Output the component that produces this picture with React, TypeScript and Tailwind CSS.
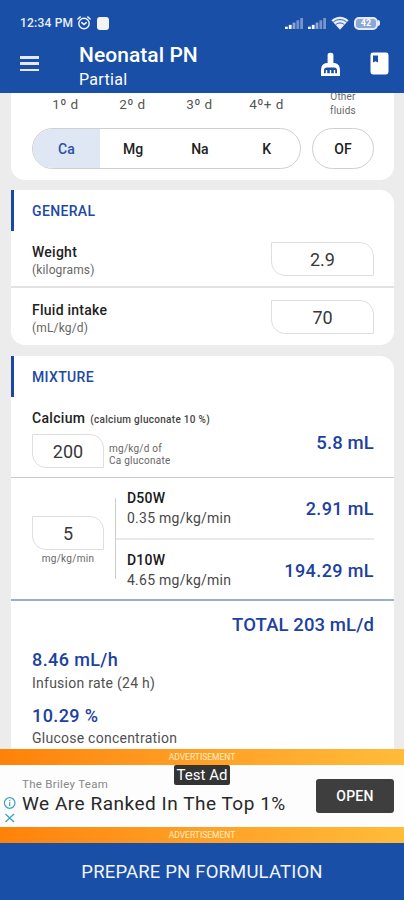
import type { ReactNode } from "react";

const electrolytes = [
  { day: "1º d", label: "Ca", active: true },
  { day: "2º d", label: "Mg", active: false },
  { day: "3º d", label: "Na", active: false },
  { day: "4º+ d", label: "K", active: false },
];

const generalFields = [
  { label: "Weight", unit: "(kilograms)", value: "2.9" },
  { label: "Fluid intake", unit: "(mL/kg/d)", value: "70" },
];

function SignalIcon() {
  return (
    <svg className="h-[11px] w-[18px]" viewBox="0 0 18 12" fill="#fff" preserveAspectRatio="none">
      <rect x="0" y="9.5" width="2.8" height="2.5" />
      <rect x="3.8" y="7.5" width="2.8" height="4.5" />
      <rect x="7.6" y="5" width="2.8" height="7" opacity="0.5" />
      <rect x="11.4" y="2.5" width="2.8" height="9.5" opacity="0.4" />
      <rect x="15.2" y="0" width="2.8" height="12" opacity="0.4" />
    </svg>
  );
}

function WifiIcon() {
  return (
    <svg className="h-[14px] w-[18px]" viewBox="0 0 18 14" fill="none">
      <path d="M0.4 4.2C5.4 -0.5 12.6 -0.5 17.6 4.2L9 13.8Z" fill="#e8eefb" />
      <path
        d="M2.3 6.2C6 2.7 12 2.7 15.7 6.2M4.7 8.7C7.2 6.4 10.8 6.4 13.3 8.7"
        stroke="#194fa7"
        strokeWidth="0.9"
      />
    </svg>
  );
}

function AlarmIcon() {
  return (
    <svg
      className="h-[14px] w-[14px]"
      viewBox="0 0 14 14"
      fill="none"
      stroke="#f4f6ff"
      strokeWidth="1.4"
      strokeLinecap="round"
    >
      <circle cx="7" cy="7.5" r="5.2" />
      <path d="M0.9 3L3.3 0.9M13.1 3L10.7 0.9M4.7 6.6L7 8.6L9.3 6.6" />
    </svg>
  );
}

function BatteryIcon() {
  return (
    <div className="flex items-center">
      <div className="flex h-[13px] w-[24px] items-center justify-center rounded-[5px] border-2 border-[#e3eafb] bg-[#8ca6d6]">
        <span className="text-[9px] font-bold leading-none text-white">42</span>
      </div>
      <div className="h-[6px] w-[2px] rounded-r-sm bg-[#e3eafb]" />
    </div>
  );
}

function BrushIcon() {
  return (
    <svg className="h-[25px] w-[21px]" viewBox="0 0 21 25">
      <path
        d="M7.6 3Q7.6 0.7 10.5 0.7Q13.4 0.7 13.4 3V11H14.6Q20 12 20 18V24H1V18Q1 12 6.4 11H7.6Z"
        fill="#fff"
      />
      <path
        d="M4 21.2V18.5Q4 15.6 7 15.6H14Q17 15.6 17 18.5V21.2H15.2V18H13.8V21.2H11.2V18H9.8V21.2H7.2V18H5.8V21.2Z"
        fill="#194fa7"
      />
    </svg>
  );
}

function BookIcon() {
  return (
    <svg className="h-[23px] w-[19px]" viewBox="0 0 19 23">
      <rect x="0.5" y="0.5" width="18" height="22" rx="2.4" fill="#fff" />
      <path d="M3 3.4H8V10.4L5.5 9.2L3 10.4Z" fill="#194fa7" />
    </svg>
  );
}

function SectionTitle({ children }: { children: ReactNode }) {
  return (
    <div className="flex h-[41px] items-center border-l-3 border-[#1c46a3] pl-[18px]">
      <h2 className="text-[14px] font-medium leading-none tracking-[0.35px] text-[#2149a3]">
        {children}
      </h2>
    </div>
  );
}

function ValueBox({ value, className }: { value: string; className: string }) {
  return (
    <div
      className={`flex h-[34px] items-center justify-center rounded-bl-[14px] rounded-tr-[14px] border border-[#dedede] pt-px text-[18px] text-[#383838] ${className}`}
    >
      {value}
    </div>
  );
}

function DextroseRow({ name, rate, volume }: { name: string; rate: string; volume: string }) {
  return (
    <div className="flex items-center justify-between pl-[11px]">
      <div>
        <p className="text-[14px] font-medium leading-[20px] tracking-[0.2px] text-[#181818]">{name}</p>
        <p className="text-[14px] leading-[20px] tracking-[0.25px] text-[#484848]">{rate}</p>
      </div>
      <p className="pt-px text-[18px] font-medium leading-[28px] tracking-[0.4px] text-[#1d419f]">{volume}</p>
    </div>
  );
}

function AdStrip() {
  return (
    <div className="flex h-[16px] shrink-0 items-center justify-center bg-linear-to-r from-[#ff8208] to-[#ffbc38] text-[8.5px] text-[#fff0cc]">
      ADVERTISEMENT
    </div>
  );
}

export default function App() {
  return (
    <div className="flex h-[900px] w-[404px] flex-col overflow-hidden bg-[#ececec] font-[Roboto,sans-serif]">
      <header className="h-[93px] shrink-0 bg-[#194fa7] text-white">
        <div className="flex h-[46px] items-center justify-between pl-5 pr-[24px]">
          <div className="flex items-center">
            <span className="w-[57px] whitespace-nowrap text-[12px] font-medium tracking-[0.2px] text-[#e8eefc]">
              12:34 PM
            </span>
            <AlarmIcon />
            <div className="ml-[6px] h-[13px] w-[12px] rounded-[3px] bg-[#f3f3f5]" />
          </div>
          <div className="flex items-center gap-[5px]">
            <SignalIcon />
            <SignalIcon />
            <WifiIcon />
            <BatteryIcon />
          </div>
        </div>
        <div className="flex h-[46px] pl-5 pr-[15px]">
          <div className="mt-[10px] flex h-[15px] w-[19px] flex-col justify-between">
            <div className="h-[2.5px] bg-[#e6e8ff]" />
            <div className="h-[2.5px] bg-[#e6e8ff]" />
            <div className="h-[2.5px] bg-[#e6e8ff]" />
          </div>
          <div className="ml-10 flex-1">
            <h1 className="mt-[-3px] text-[21px] font-medium leading-[24px] tracking-[0.05px]">Neonatal PN</h1>
            <p className="text-[16px] leading-[25px] tracking-[0.3px]">Partial</p>
          </div>
          <div className="mt-[6px] flex gap-[29px]">
            <BrushIcon />
            <BookIcon />
          </div>
        </div>
      </header>

      <main className="h-[656px] shrink-0 overflow-hidden pl-[11px] pr-[10px]">
        <section className="flex h-[87px] gap-[11px] rounded-b-[14px] bg-white pl-[21px]">
          <div>
            <div className="flex h-[35px] pt-[2px]">
              {electrolytes.map((item) => (
                <span
                  key={item.day}
                  className="w-[67px] text-center text-[13.5px] leading-[18px] tracking-[0.4px] text-[#555]"
                >
                  {item.day}
                </span>
              ))}
            </div>
            <div className="flex h-[41px] w-[269px] overflow-hidden rounded-full border border-[#cfcfcf]">
              {electrolytes.map((item) => (
                <button
                  key={item.label}
                  className={`flex-1 pt-px text-[14px] font-medium ${
                    item.active ? "bg-[#dfe6f4] text-[#2b50a7]" : "text-[#222]"
                  }`}
                >
                  {item.label}
                </button>
              ))}
            </div>
          </div>
          <div className="w-[62px]">
            <p className="mt-[-3px] h-[38px] text-center text-[10px] leading-[14px] tracking-[0.2px] text-[#666]">
              Other
              <br />
              fluids
            </p>
            <button className="h-[41px] w-full rounded-full border border-[#cfcfcf] pt-px text-[14px] font-medium text-[#222]">
              OF
            </button>
          </div>
        </section>

        <section className="mt-[10px] h-[155px] overflow-hidden rounded-[14px] rounded-tl-none bg-white">
          <SectionTitle>GENERAL</SectionTitle>
          <div className="divide-y-2 divide-[#e2e2e2]">
            {generalFields.map((field) => (
              <div key={field.label} className="flex h-[57px] items-center justify-between pl-[21px] pr-5">
                <div className="pt-[5px]">
                  <p className="text-[14px] font-medium leading-[18px] tracking-[0.25px] text-[#222]">
                    {field.label}
                  </p>
                  <p className="text-[12px] leading-[18px] tracking-[0.15px] text-[#666]">{field.unit}</p>
                </div>
                <ValueBox value={field.value} className="w-[103px]" />
              </div>
            ))}
          </div>
        </section>

        <section className="mt-[11px] h-[400px] rounded-tr-[14px] bg-white">
          <SectionTitle>MIXTURE</SectionTitle>

          <div className="flex h-[81px] justify-between border-b border-[#ccc] pl-[21px] pr-5 pt-3">
            <div>
              <p className="text-[14px] font-medium leading-[18px] tracking-[0.3px] text-[#222]">
                Calcium
                <span className="ml-[5px] text-[10px] tracking-[0.3px] text-[#444]">
                  (calcium gluconate 10 %)
                </span>
              </p>
              <div className="mt-[5px] flex">
                <ValueBox value="200" className="w-[72px]" />
                <p className="ml-[5px] mt-[9px] text-[10px] leading-[12px] tracking-[0.25px] text-[#666]">
                  mg/kg/d of
                  <br />
                  Ca gluconate
                </p>
              </div>
            </div>
            <p className="mt-[20px] text-[18.5px] font-medium leading-[28px] tracking-[0.15px] text-[#1d419f]">
              5.8 mL
            </p>
          </div>

          <div className="flex h-[123px] border-b-2 border-[#9aafd0] pl-[21px] pr-5">
            <div className="mt-[38px] w-[72px]">
              <ValueBox value="5" className="w-[72px]" />
              <p className="text-center text-[10px] leading-[17px] tracking-[0.3px] text-[#666]">mg/kg/min</p>
            </div>
            <div className="ml-[11px] mt-[20px] h-[81px] w-px bg-[#ccc]" />
            <div className="flex-1 pt-[10px]">
              <DextroseRow name="D50W" rate="0.35 mg/kg/min" volume="2.91 mL" />
              <div className="my-[10px] h-[2px] bg-[#e9e9e9]" />
              <DextroseRow name="D10W" rate="4.65 mg/kg/min" volume="194.29 mL" />
            </div>
          </div>

          <div className="pl-[21px] pr-5">
            <p className="mt-3 text-right text-[18.5px] font-medium leading-[24px] tracking-[0.1px] text-[#1d419f]">
              TOTAL 203 mL/d
            </p>
            <p className="mt-[11px] text-[18px] font-medium leading-[24px] tracking-[0.4px] text-[#1d419f]">
              8.46 mL/h
            </p>
            <p className="text-[14px] leading-[22px] tracking-[0.25px] text-[#505050]">
              Infusion rate (24 h)
            </p>
            <p className="mt-[10px] text-[18px] font-medium leading-[24px] tracking-[0.4px] text-[#1d419f]">
              10.29 %
            </p>
            <p className="text-[14px] leading-[21px] tracking-[0.25px] text-[#505050]">
              Glucose concentration
            </p>
          </div>
        </section>
      </main>

      <AdStrip />
      <div className="relative flex h-[62px] shrink-0 justify-between bg-[#fdfdfd] pr-[10px]">
        <div className="flex">
          <svg className="mt-[31px] h-[28px] w-[19px]" viewBox="0 0 19 28" fill="none" stroke="#35a5bc" strokeWidth="1.2">
            <circle cx="9.7" cy="7" r="5.3" />
            <path d="M9.7 6.3V10M9.7 4V5.2M5.5 18L14 26M14 18L5.5 26" />
          </svg>
          <div className="ml-[3px] mt-[10px]">
            <p className="text-[11.5px] leading-[18px] tracking-[0.3px] text-[#888]">The Briley Team</p>
            <p className="whitespace-nowrap text-[19px] leading-[22px] tracking-[0.52px] text-[#282828]">
              We Are Ranked In The Top 1%
            </p>
          </div>
        </div>
        <button className="mt-[14px] h-[34px] w-[78px] rounded-[3px] bg-[#3e3e3e] text-[14px] font-medium tracking-[0.3px] text-white">
          OPEN
        </button>
        <span className="absolute left-[174px] top-0 flex h-[20px] w-[56px] items-center justify-center whitespace-nowrap rounded-[2px] bg-[#343434] pt-px text-[15px] text-white">
          Test Ad
        </span>
      </div>
      <AdStrip />
      <button className="flex-1 bg-[#194fa7] pt-[3px] text-[18.5px] tracking-[0.17px] text-[#f2f5ff]">
        PREPARE PN FORMULATION
      </button>
    </div>
  );
}
